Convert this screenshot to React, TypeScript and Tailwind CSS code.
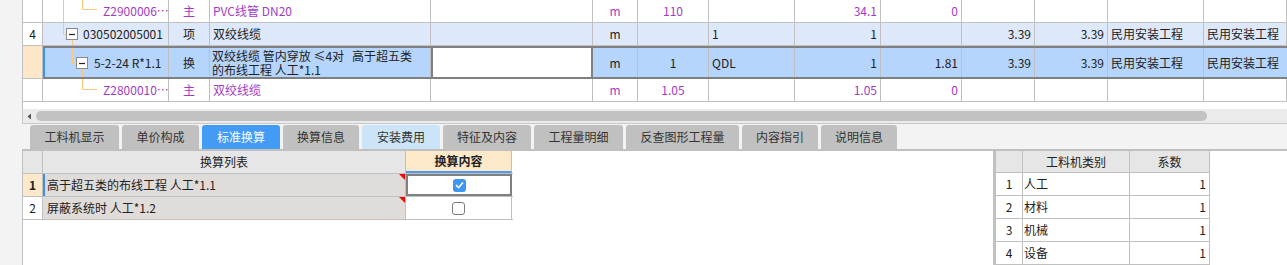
import React from 'react'

const W = [
  'w-[20px]',
  'w-[126px]',
  'w-[41px]',
  'w-[221px]',
  'w-[162px]',
  'w-[45px]',
  'w-[71px]',
  'w-[86px]',
  'w-[86px]',
  'w-[81px]',
  'w-[73px]',
  'w-[73px]',
  'w-[96px]',
  'w-[83px]',
]

type Align = 'l' | 'c' | 'r'
type CellData = { t?: string; a?: Align }

const alignCls: Record<Align, string> = {
  l: 'justify-start pl-[3px]',
  c: 'justify-center',
  r: 'justify-end pr-[3px]',
}

const LINE = '#fbc77e'

function TreeBox({ x, y }: { x: number; y: number }) {
  return (
    <>
      <rect x={x + 0.5} y={y + 0.5} width={11} height={11} fill="#fff" stroke="#8a8a8a" />
      <path d={`M${x + 3} ${y + 6.5}H${x + 9}`} stroke="#222" strokeWidth={1.2} />
    </>
  )
}

function TreeCell({
  children,
  pad,
  lines,
  box,
  purple,
}: {
  children: React.ReactNode
  pad: string
  lines: string
  box?: { x: number; y: number }
  purple?: boolean
}) {
  return (
    <div className={`relative h-full ${W[1]} overflow-hidden border-r border-[#c0c0c0] flex items-center ${pad}`}>
      <svg className="absolute inset-0 h-full w-full" fill="none">
        <path d={lines} stroke={LINE} strokeWidth={1} />
        {box && <TreeBox x={box.x} y={box.y} />}
      </svg>
      <span className={`relative whitespace-nowrap ${purple ? 'text-[#a23bc4]' : 'text-[#222]'}`}>
        {children}
      </span>
    </div>
  )
}

function Cells({ cells, purple }: { cells: CellData[]; purple?: boolean }) {
  return (
    <>
      {cells.map((c, i) => (
        <div
          key={i}
          className={`h-full ${W[i + 2]} overflow-hidden border-r border-[#c0c0c0] flex items-center whitespace-nowrap ${alignCls[c.a ?? 'l']} ${
            purple ? 'text-[#a23bc4]' : 'text-[#222]'
          }`}
        >
          {c.t}
        </div>
      ))}
    </>
  )
}

function RowNum({ children, className = '' }: { children?: React.ReactNode; className?: string }) {
  return (
    <div
      className={`h-full ${W[0]} border-r border-[#c0c0c0] flex items-center justify-center text-[#222] ${className}`}
    >
      {children}
    </div>
  )
}

function TopGrid() {
  return (
    <div className="bg-white border-l border-[#c0c0c0] text-[12px]">
      <div className="flex h-[23px] border-b border-[#c0c0c0] bg-white">
        <RowNum />
        <TreeCell pad="pl-[60px]" lines="M20.5 0V23 M39.5 0V9.5H54" purple>
          Z2900006…
        </TreeCell>
        <Cells
          purple
          cells={[
            { t: '主', a: 'c' },
            { t: 'PVC线管 DN20' },
            {},
            { t: 'm', a: 'c' },
            { t: '110', a: 'c' },
            {},
            { t: '34.1', a: 'r' },
            { t: '0', a: 'r' },
            {},
            {},
            {},
            {},
          ]}
        />
      </div>

      <div className="flex h-[23px] border-b border-[#c0c0c0] bg-[#dde9fb]">
        <RowNum className="bg-white">4</RowNum>
        <TreeCell pad="pl-[40px]" lines="M20.5 0V11.5H23 M29.5 17V23" box={{ x: 23, y: 5 }}>
          030502005001
        </TreeCell>
        <Cells
          cells={[
            { t: '项', a: 'c' },
            { t: '双绞线缆' },
            {},
            { t: 'm', a: 'c' },
            {},
            { t: '1' },
            { t: '1', a: 'r' },
            {},
            { t: '3.39', a: 'r' },
            { t: '3.39', a: 'r' },
            { t: '民用安装工程' },
            { t: '民用安装工程' },
          ]}
        />
      </div>

      <div className="flex h-[33px]">
        <div className={`h-full ${W[0]} bg-[#fde7c8] border-r border-b border-[#c0c0c0]`} />
        <div className="flex flex-1 border-y-2 border-[#808080] bg-[#b5d5fd]">
          <div className={`relative h-full ${W[1]} border-l-2 border-l-[#3d8ef0] border-r border-r-[#c0c0c0] flex items-center pl-[49px]`}>
            <svg className="absolute inset-0 h-full w-full" fill="none">
              <path d="M27.5 0V15.5H31 M37.5 21V29" stroke={LINE} strokeWidth={1} />
              <TreeBox x={31} y={9} />
            </svg>
            <span className="relative whitespace-nowrap text-[#222]">5-2-24 R*1.1</span>
          </div>
          <div className={`h-full ${W[2]} border-r border-[#c0c0c0] flex items-center justify-center text-[#222]`}>
            换
          </div>
          <div className={`h-full ${W[3]} border-r border-[#c0c0c0] flex flex-col justify-center pl-[2px] leading-[14px] text-[#222] whitespace-pre`}>
            <span>双绞线缆 管内穿放 ≤4对   高于超五类</span>
            <span>的布线工程 人工*1.1</span>
          </div>
          <div className={`h-full ${W[4]} bg-white border-x-2 border-[#808080]`} />
          <div className={`h-full ${W[5]} border-r border-[#c0c0c0] flex items-center justify-center text-[#222]`}>
            m
          </div>
          <div className={`h-full ${W[6]} border-r border-[#c0c0c0] flex items-center justify-center text-[#222]`}>
            1
          </div>
          <div className={`h-full ${W[7]} border-r border-[#c0c0c0] flex items-center pl-[3px] text-[#222]`}>
            QDL
          </div>
          <div className={`h-full ${W[8]} border-r border-[#c0c0c0] flex items-center justify-end pr-[3px] text-[#222]`}>
            1
          </div>
          <div className={`h-full ${W[9]} border-r border-[#c0c0c0] flex items-center justify-end pr-[3px] text-[#222]`}>
            1.81
          </div>
          <div className={`h-full ${W[10]} border-r border-[#c0c0c0] flex items-center justify-end pr-[3px] text-[#222]`}>
            3.39
          </div>
          <div className={`h-full ${W[11]} border-r border-[#c0c0c0] flex items-center justify-end pr-[3px] text-[#222]`}>
            3.39
          </div>
          <div className={`h-full ${W[12]} border-r border-[#c0c0c0] flex items-center pl-[3px] text-[#222] whitespace-nowrap`}>
            民用安装工程
          </div>
          <div className={`h-full ${W[13]} flex items-center pl-[3px] text-[#222] whitespace-nowrap`}>
            民用安装工程
          </div>
        </div>
      </div>

      <div className="flex h-[23px] border-b border-[#c0c0c0] bg-white">
        <RowNum />
        <TreeCell pad="pl-[60px]" lines="M39.5 0V10.5H54" purple>
          Z2800010…
        </TreeCell>
        <Cells
          purple
          cells={[
            { t: '主', a: 'c' },
            { t: '双绞线缆' },
            {},
            { t: 'm', a: 'c' },
            { t: '1.05', a: 'c' },
            {},
            { t: '1.05', a: 'r' },
            { t: '0', a: 'r' },
            {},
            {},
            {},
            {},
          ]}
        />
      </div>
      <div className="h-[7px]" />
    </div>
  )
}

function ScrollBar() {
  return (
    <div className="flex h-[15px] items-center bg-[#ebebeb] border-l border-b border-[#c8c8c8]">
      <svg width="13" height="15" className="shrink-0">
        <path d="M8 4.5V10.5L4.5 7.5Z" fill="#555" />
      </svg>
      <div className="h-[10px] w-[1171px] rounded-full bg-[#c2c2c2]" />
    </div>
  )
}

const tabs = [
  { t: '工料机显示', w: 'w-[89px]' },
  { t: '单价构成', w: 'w-[77px]' },
  { t: '标准换算', w: 'w-[78px]', active: true },
  { t: '换算信息', w: 'w-[76px]' },
  { t: '安装费用', w: 'w-[78px]', light: true },
  { t: '特征及内容', w: 'w-[88px]' },
  { t: '工程量明细', w: 'w-[89px]' },
  { t: '反查图形工程量', w: 'w-[113px]' },
  { t: '内容指引', w: 'w-[76px]' },
  { t: '说明信息', w: 'w-[76px]' },
]

function Tabs() {
  return (
    <div className="flex h-[32px] items-end gap-[3px] pl-[8px] bg-[#f3f3f3] border-b-2 border-[#c0c0c0]">
      {tabs.map((tab) => (
        <div
          key={tab.t}
          className={`${tab.w} h-[24px] rounded-t-[3px] flex items-center justify-center text-[12px] ${
            tab.active
              ? 'bg-[#449bf5] text-white'
              : tab.light
                ? 'bg-[#cce4f7] text-[#333]'
                : 'bg-[#c0c0c0] text-[#333]'
          }`}
        >
          {tab.t}
        </div>
      ))}
    </div>
  )
}

function RedMark() {
  return (
    <svg width="6" height="6" className="absolute right-0 top-0">
      <path d="M0 0H6V6Z" fill="#f00" />
    </svg>
  )
}

function Check({ on }: { on?: boolean }) {
  if (on)
    return (
      <div className="flex h-[13px] w-[13px] items-center justify-center rounded-[3px] bg-[#3d95f5]">
        <svg width="9" height="8" fill="none">
          <path d="M1 4.2L3.6 6.6L8 1.5" stroke="#fff" strokeWidth={1.6} />
        </svg>
      </div>
    )
  return <div className="h-[13px] w-[13px] rounded-[3px] border border-[#7a7a7a] bg-white" />
}

function ConvTable() {
  return (
    <div className="w-[490px] text-[12px] text-[#222]">
      <div className="flex h-[23px] border-b border-[#c0c0c0]">
        <div className="w-[20px] bg-[#e6e6e6] border-r border-[#c0c0c0]" />
        <div className="w-[363px] bg-[#e6e6e6] border-r border-[#c0c0c0] flex items-center justify-center">
          换算列表
        </div>
        <div className="w-[106px] bg-[#fde8c9] border-r border-[#c0c0c0] border-b-2 border-b-[#4a9cf5] flex items-center justify-center font-bold">
          换算内容
        </div>
      </div>
      <div className="flex h-[23px] border-b border-[#c0c0c0]">
        <div className="w-[20px] bg-[#fde8c9] border-r border-[#c0c0c0] flex items-center justify-center font-bold">
          1
        </div>
        <div className="relative w-[363px] bg-[#e0dcd9] border-l-2 border-l-[#3d8ef0] border-r border-r-[#c0c0c0] flex items-center pl-[2px]">
          高于超五类的布线工程 人工*1.1
          <RedMark />
        </div>
        <div className="w-[106px] bg-white border-2 border-[#808080] flex items-center justify-center">
          <Check on />
        </div>
      </div>
      <div className="flex h-[23px] border-b border-[#c0c0c0]">
        <div className="w-[20px] bg-white border-r border-[#c0c0c0] flex items-center justify-center">2</div>
        <div className="relative w-[363px] bg-[#e0dcd9] border-r border-[#c0c0c0] flex items-center pl-[4px]">
          屏蔽系统时 人工*1.2
          <RedMark />
        </div>
        <div className="w-[106px] bg-white border-r border-[#c0c0c0] flex items-center justify-center">
          <Check />
        </div>
      </div>
    </div>
  )
}

const kinds = ['人工', '材料', '机械', '设备']

function KindTable() {
  return (
    <div className="w-[214px] text-[12px] text-[#222]">
      <div className="flex h-[22px] border-b border-[#c0c0c0] bg-[#e6e6e6]">
        <div className="w-[27px] border-r border-[#c0c0c0]" />
        <div className="w-[107px] border-r border-[#c0c0c0] flex items-center justify-center">工料机类别</div>
        <div className="w-[80px] border-r border-[#c0c0c0] flex items-center justify-center">系数</div>
      </div>
      {kinds.map((k, i) => (
        <div key={k} className="flex h-[23px] border-b border-[#c0c0c0]">
          <div className="w-[27px] border-r border-[#c0c0c0] flex items-center justify-center">{i + 1}</div>
          <div className="w-[107px] border-r border-[#c0c0c0] flex items-center pl-[1px]">{k}</div>
          <div className="w-[80px] border-r border-[#c0c0c0] flex items-center justify-end pr-[3px]">1</div>
        </div>
      ))}
    </div>
  )
}

export default function App() {
  return (
    <div
      lang="zh-CN"
      className="flex h-[265px] w-[1287px] overflow-hidden bg-[#f3f3f3] font-['Noto_Sans_CJK_SC',sans-serif]"
    >
      <div className="w-[22px] shrink-0" />
      <div className="flex flex-1 flex-col">
        <TopGrid />
        <ScrollBar />
        <Tabs />
        <div className="flex flex-1">
          <div className="w-[971px] bg-white border-l border-[#c0c0c0]">
            <ConvTable />
          </div>
          <div className="w-[3px] bg-[#c0c0c0]" />
          <div className="flex-1 bg-white">
            <KindTable />
          </div>
        </div>
      </div>
    </div>
  )
}
